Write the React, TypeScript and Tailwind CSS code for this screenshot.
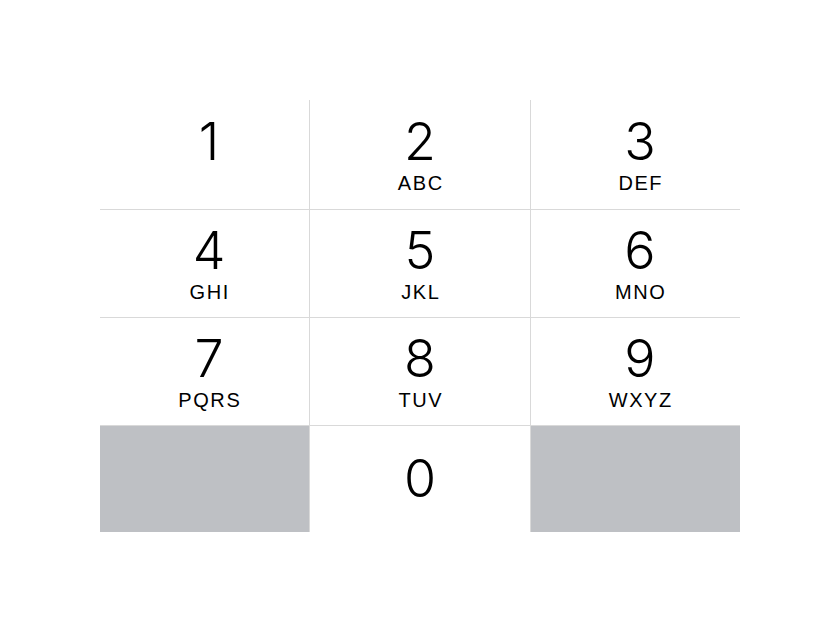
const keys = [
  { digit: "1", letters: "" },
  { digit: "2", letters: "ABC" },
  { digit: "3", letters: "DEF" },
  { digit: "4", letters: "GHI" },
  { digit: "5", letters: "JKL" },
  { digit: "6", letters: "MNO" },
  { digit: "7", letters: "PQRS" },
  { digit: "8", letters: "TUV" },
  { digit: "9", letters: "WXYZ" },
];

function Key({ digit, letters, middle }: { digit: string; letters: string; middle: boolean }) {
  return (
    <div
      className={
        middle
          ? "flex flex-col items-center justify-center border-x border-b border-[#d9d9d9] bg-white"
          : "flex flex-col items-center justify-center border-b border-[#d9d9d9] bg-white pl-[9px]"
      }
    >
      <span className="text-[52px] font-light leading-[50px] text-black">{digit}</span>
      {/* keep the "1" key aligned with the lettered keys */}
      <span
        className="mt-[6px] pl-[0.08em] text-[20px] leading-none tracking-[0.08em] text-black"
        style={{ fontFamily: '"Liberation Sans", Arial, sans-serif' }}
      >
        {letters || "\u00a0"}
      </span>
    </div>
  );
}

export default function App() {
  return (
    <div
      className="h-[632px] w-[840px] bg-white pt-[100px] pl-[100px]"
      style={{ fontFamily: '"Helvetica Neue", Inter, "Liberation Sans", sans-serif' }}
    >
      <div className="grid w-[640px] grid-cols-[209px_222px_209px] grid-rows-[110px_108px_108px_106px]">
        {keys.map((k, i) => (
          <Key key={k.digit} digit={k.digit} letters={k.letters} middle={i % 3 === 1} />
        ))}
        <div className="bg-[#bec0c4]" />
        <div className="flex items-center justify-center border-x border-[#d9d9d9] bg-white">
          <span className="text-[52px] font-light leading-none text-black">0</span>
        </div>
        <div className="bg-[#bec0c4]" />
      </div>
    </div>
  );
}
